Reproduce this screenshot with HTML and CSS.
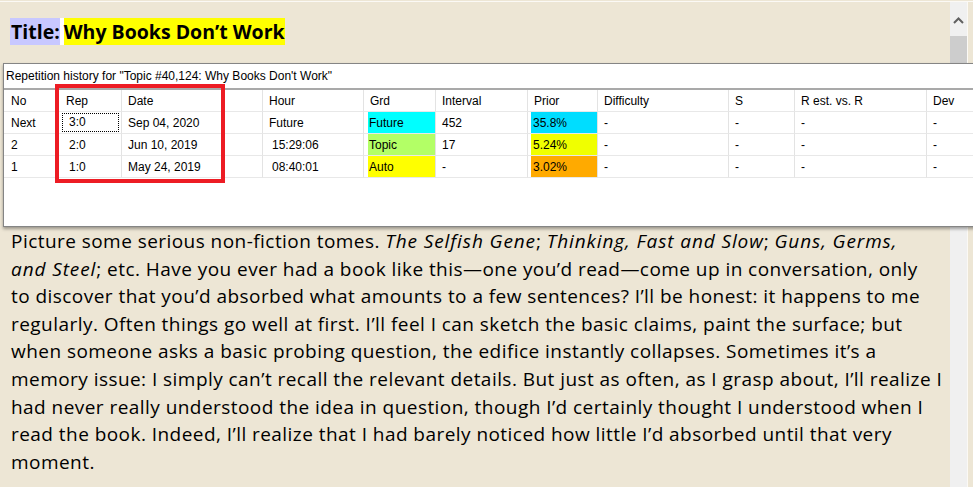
FILE: index.html
```html
<!DOCTYPE html>
<html>
<head>
<meta charset="utf-8">
<link rel="stylesheet" href="styles.css">
</head>
<body>
<div class="topline"></div>
<div class="frame">
  <div class="doc">
    <div class="title"><span class="lbl">Title:</span><span class="gap"></span><span class="ttl">Why Books Don’t Work</span></div>
    <p class="text">Picture some serious non-fiction tomes. <i>The Selfish Gene</i>; <i>Thinking, Fast and Slow</i>; <i>Guns, Germs,</i><br><i>and Steel</i>; etc. Have you ever had a book like this—one you’d read—come up in conversation, only<br>to discover that you’d absorbed what amounts to a few sentences? I’ll be honest: it happens to me<br>regularly. Often things go well at first. I’ll feel I can sketch the basic claims, paint the surface; but<br>when someone asks a basic probing question, the edifice instantly collapses. Sometimes it’s a<br>memory issue: I simply can’t recall the relevant details. But just as often, as I grasp about, I’ll realize I<br>had never really understood the idea in question, though I’d certainly thought I understood when I<br>read the book. Indeed, I’ll realize that I had barely noticed how little I’d absorbed until that very<br>moment.</p>
  </div>
  <div class="scrollbar">
    <div class="arrow"><svg width="11" height="7" viewBox="0 0 11 7"><path d="M1 6 L5.5 1.5 L10 6" fill="none" stroke="#606060" stroke-width="2"/></svg></div>
    <div class="thumb"></div>
  </div>
  <div class="edge"></div>
</div>

<div class="popup">
  <div class="caption">Repetition history for "Topic #40,124: Why Books Don't Work"</div>
  <div class="grid">
    <div class="c h c1">No</div><div class="c h c2">Rep</div><div class="c h">Date</div><div class="c h">Hour</div><div class="c h">Grd</div><div class="c h">Interval</div><div class="c h">Prior</div><div class="c h">Difficulty</div><div class="c h">S</div><div class="c h">R est. vs. R</div><div class="c h">Dev</div>

    <div class="c c1">Next</div><div class="c rep"><span class="focus">3:0</span></div><div class="c">Sep 04, 2020</div><div class="c">Future</div><div class="c col"><span class="fill future">Future</span></div><div class="c">452</div><div class="c colp"><span class="fill p1">35.8%</span></div><div class="c">-</div><div class="c">-</div><div class="c">-</div><div class="c">-</div>

    <div class="c c1">2</div><div class="c rep"><span class="plain">2:0</span></div><div class="c">Jun 10, 2019</div><div class="c time">15:29:06</div><div class="c col"><span class="fill topic">Topic</span></div><div class="c">17</div><div class="c colp"><span class="fill p2">5.24%</span></div><div class="c">-</div><div class="c">-</div><div class="c">-</div><div class="c">-</div>

    <div class="c c1">1</div><div class="c rep"><span class="plain">1:0</span></div><div class="c">May 24, 2019</div><div class="c time">08:40:01</div><div class="c col"><span class="fill auto">Auto</span></div><div class="c">-</div><div class="c colp"><span class="fill p3">3.02%</span></div><div class="c">-</div><div class="c">-</div><div class="c">-</div><div class="c">-</div>
  </div>
  <div class="redbox"></div>
</div>
</body>
</html>
```
FILE: styles.css
```css
html, body {
  margin: 0;
  padding: 0;
  height: 100%;
  overflow: hidden;
}
body {
  background: #ede6d5;
  font-family: "Open Sans", Lato, sans-serif;
  color: #000;
  position: relative;
}
.topline {
  height: 1px;
  margin-top: 1px;
  background: #fbf9f5;
}
.frame {
  display: flex;
  height: 485px;
}
.doc {
  flex: 1;
  padding-left: 10px;
}
.title {
  padding-top: 16px;
  font-weight: bold;
  font-size: 19.5px;
  line-height: 27px;
  height: 27px;
  white-space: nowrap;
}
.title span {
  display: inline-block;
  height: 27px;
  vertical-align: top;
}
.lbl {
  background: #c8c8ff;
  padding-left: 1px;
}
.gap {
  width: 4px;
  background: #fff;
}
.ttl {
  background: #ffff00;
}
.text {
  margin: 183px 0 0 1px;
  font-size: 19px;
  letter-spacing: 0.45px;
  line-height: 27.6px;
  white-space: nowrap;
}
.text i {
  letter-spacing: 0.9px;
}
.scrollbar {
  width: 17px;
  background: #f0f0f0;
  display: flex;
  flex-direction: column;
  align-items: center;
}
.arrow {
  height: 34px;
  display: flex;
  align-items: center;
  justify-content: center;
  padding-top: 2px;
  box-sizing: border-box;
}
.thumb {
  width: 17px;
  height: 170px;
  background: #cdcdcd;
}
.edge {
  width: 1px;
  background: #fbf9f5;
  margin-right: 5px;
}

/* popup window */
.popup {
  position: absolute;
  left: 3px;
  top: 63px;
  width: 1000px;
  height: 164px;
  box-sizing: border-box;
  background: #fff;
  border: 1px solid #858585;
  box-shadow: 0 2px 3px rgba(0,0,0,0.35);
  font-family: "Liberation Sans", Arial, sans-serif;
  font-size: 12px;
}
.caption {
  height: 24px;
  line-height: 25px;
  padding-left: 2px;
  border-bottom: 2px solid #a9a9a9;
  white-space: nowrap;
}
.grid {
  display: grid;
  grid-template-columns: 53px 65px 141px 101px 72px 92px 70px 131px 66px 132px 1fr;
  grid-auto-rows: 22px;
}
.c {
  box-sizing: border-box;
  border-right: 1px solid #e3e3e3;
  border-bottom: 1px solid #e8e8e8;
  padding-left: 6px;
  padding-top: 2px;
  line-height: 19px;
  white-space: nowrap;
  overflow: hidden;
}
.c1 { padding-left: 7px; }
.c2 { padding-left: 9px; }
.time { padding-left: 9px; }
.rep { padding-left: 5px; padding-top: 1px; }
.focus {
  display: block;
  width: 57px;
  height: 19px;
  box-sizing: border-box;
  border: 1px dotted #000;
  line-height: 17px;
  padding-left: 6px;
}
.plain {
  display: block;
  line-height: 19px;
  padding-left: 7px;
  padding-top: 1px;
}
.col { padding: 0 0 0 4px; }
.colp { padding: 0 0 0 3px; }
.fill {
  display: block;
  height: 21px;
  line-height: 22px;
  padding-left: 1px;
}
.colp .fill { padding-left: 2px; }
.future { background: #00ffff; }
.topic { background: #b3ff66; }
.auto { background: #ffff00; }
.p1 { background: #00ddff; }
.p2 { background: #f0ff00; }
.p3 { background: #ffaa00; }
.redbox {
  position: absolute;
  left: 51px;
  top: 20px;
  width: 170px;
  height: 99px;
  box-sizing: border-box;
  border: 4px solid #ed1c24;
}
```
